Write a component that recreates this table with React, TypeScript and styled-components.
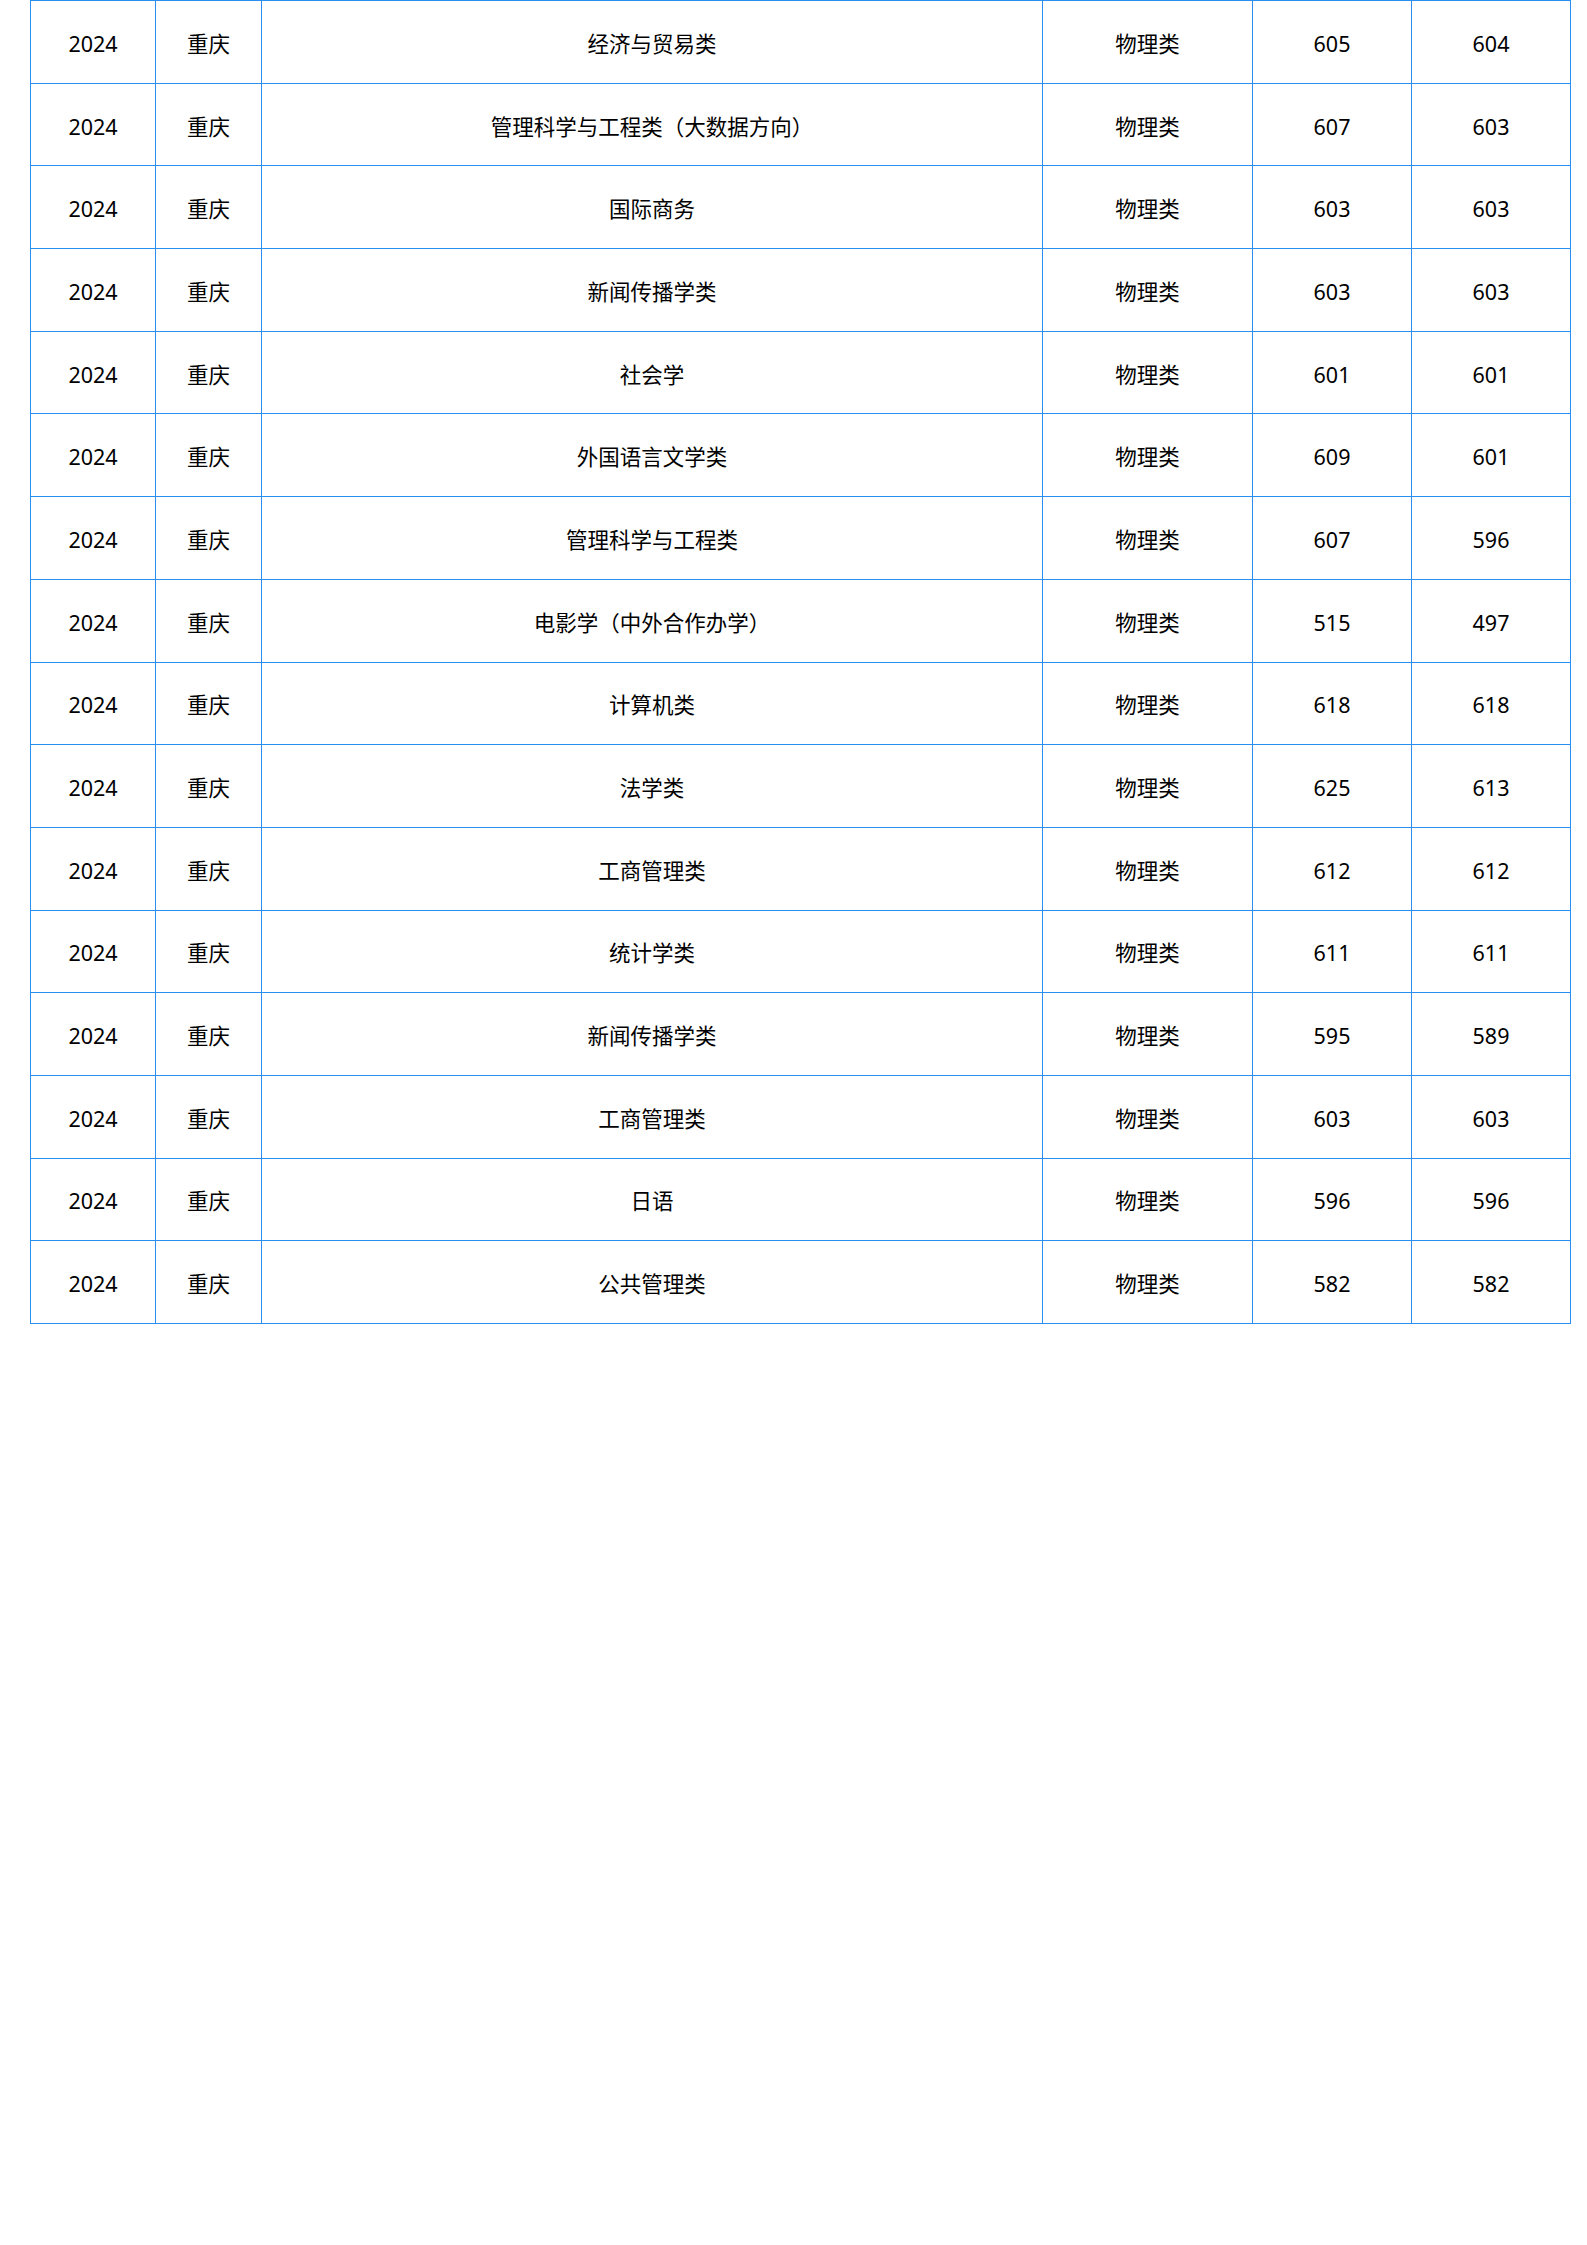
import React from 'react';
import styled, { createGlobalStyle } from 'styled-components';

const GlobalStyle = createGlobalStyle`
  html, body {
    margin: 0;
    padding: 0;
    background: #fff;
  }
  body {
    font-family: "Noto Sans", "Noto Sans CJK SC", sans-serif;
    color: #000;
  }
`;

const Page = styled.div`
  width: 1587px;
  min-height: 2245px;
  padding-left: 30px;
  box-sizing: border-box;
`;

const Sheet = styled.table`
  width: 1540px;
  border-collapse: collapse;
  table-layout: fixed;
`;

const Row = styled.tr`
  height: 82.7px;
`;

const Cell = styled.td`
  border: 1px solid #2b8ff2;
  padding: 4px 0 0;
  text-align: center;
  vertical-align: middle;
  font-size: 21.5px;
  line-height: 30px;
  white-space: nowrap;
`;

const widths = [125, 106, 781, 210, 159, 159];

const rows: [string, string, string][] = [
  ['经济与贸易类', '605', '604'],
  ['管理科学与工程类（大数据方向）', '607', '603'],
  ['国际商务', '603', '603'],
  ['新闻传播学类', '603', '603'],
  ['社会学', '601', '601'],
  ['外国语言文学类', '609', '601'],
  ['管理科学与工程类', '607', '596'],
  ['电影学（中外合作办学）', '515', '497'],
  ['计算机类', '618', '618'],
  ['法学类', '625', '613'],
  ['工商管理类', '612', '612'],
  ['统计学类', '611', '611'],
  ['新闻传播学类', '595', '589'],
  ['工商管理类', '603', '603'],
  ['日语', '596', '596'],
  ['公共管理类', '582', '582'],
];

const App = () => (
  <>
    <GlobalStyle />
    <Page>
      <Sheet>
        <colgroup>
          {widths.map((w, i) => (
            <col key={i} style={{ width: w }} />
          ))}
        </colgroup>
        <tbody>
          {rows.map(([major, max, min], i) => (
            <Row key={i}>
              <Cell>2024</Cell>
              <Cell>重庆</Cell>
              <Cell>{major}</Cell>
              <Cell>物理类</Cell>
              <Cell>{max}</Cell>
              <Cell>{min}</Cell>
            </Row>
          ))}
        </tbody>
      </Sheet>
    </Page>
  </>
);

export default App;
